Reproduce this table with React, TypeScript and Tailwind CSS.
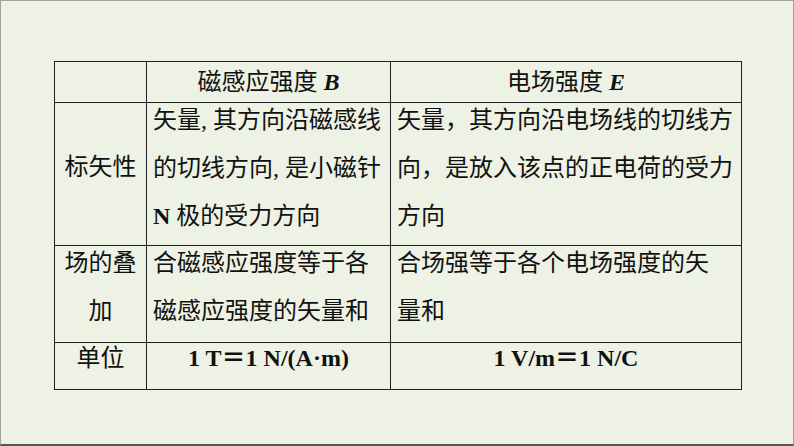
import React from 'react'

const font = { fontFamily: '"Liberation Serif", "Noto Sans CJK SC", serif' }

const cell = 'border border-[#1e1e1e] p-0'

const App = () => {
    return (
        <div className="w-[794px] h-[446px] bg-[#edf2e4] border-t border-x border-[#9ea395] border-b-2 border-b-[#55594f] pl-[53px] pt-[60px] text-[24px] text-[#111]" style={font}>
            <table className="table-fixed border-collapse w-[687px]">
                <colgroup>
                    <col className="w-[92px]" />
                    <col className="w-[244px]" />
                    <col className="w-[351px]" />
                </colgroup>
                <tbody>
                    {/* header */}
                    <tr className="h-[41px]">
                        <td className={cell}></td>
                        <td className={`${cell} align-middle text-center leading-[30px]`}>
                            磁感应强度 <b className="italic">B</b>
                        </td>
                        <td className={`${cell} align-middle text-center leading-[30px]`}>
                            电场强度 <b className="italic">E</b>
                        </td>
                    </tr>

                    <tr className="h-[143px]">
                        <td className={`${cell} align-middle text-center`}>
                            <div className="leading-[48px] mb-[14px]">标矢性</div>
                        </td>
                        <td className={`${cell} align-top pl-[6px]`}>
                            <div className="leading-[48px] -mt-[7px] whitespace-nowrap">
                                矢量, 其方向沿磁感线<br />
                                的切线方向, 是小磁针<br />
                                <b>N</b> 极的受力方向
                            </div>
                        </td>
                        <td className={`${cell} align-top pl-[6px]`}>
                            <div className="leading-[48px] -mt-[7px] whitespace-nowrap">
                                矢量，其方向沿电场线的切线方<br />
                                向，是放入该点的正电荷的受力<br />
                                方向
                            </div>
                        </td>
                    </tr>

                    <tr className="h-[97px]">
                        <td className={`${cell} align-top text-center`}>
                            <div className="leading-[48px] -mt-[7px]">
                                场的叠<br />加
                            </div>
                        </td>
                        <td className={`${cell} align-top pl-[6px]`}>
                            <div className="leading-[48px] -mt-[7px] whitespace-nowrap">
                                合磁感应强度等于各<br />
                                磁感应强度的矢量和
                            </div>
                        </td>
                        <td className={`${cell} align-top pl-[6px]`}>
                            <div className="leading-[48px] -mt-[7px] whitespace-nowrap">
                                合场强等于各个电场强度的矢<br />
                                量和
                            </div>
                        </td>
                    </tr>

                    <tr className="h-[47px]">
                        <td className={`${cell} align-top text-center`}>
                            <div className="leading-[48px] -mt-[9px]">单位</div>
                        </td>
                        <td className={`${cell} align-top text-center font-bold`}>
                            <div className="leading-[48px] -mt-[9px] whitespace-nowrap">1 T＝1 N/(A·m)</div>
                        </td>
                        <td className={`${cell} align-top text-center font-bold`}>
                            <div className="leading-[48px] -mt-[9px] whitespace-nowrap">1 V/m＝1 N/C</div>
                        </td>
                    </tr>
                </tbody>
            </table>
        </div>
    )
}

export default App
